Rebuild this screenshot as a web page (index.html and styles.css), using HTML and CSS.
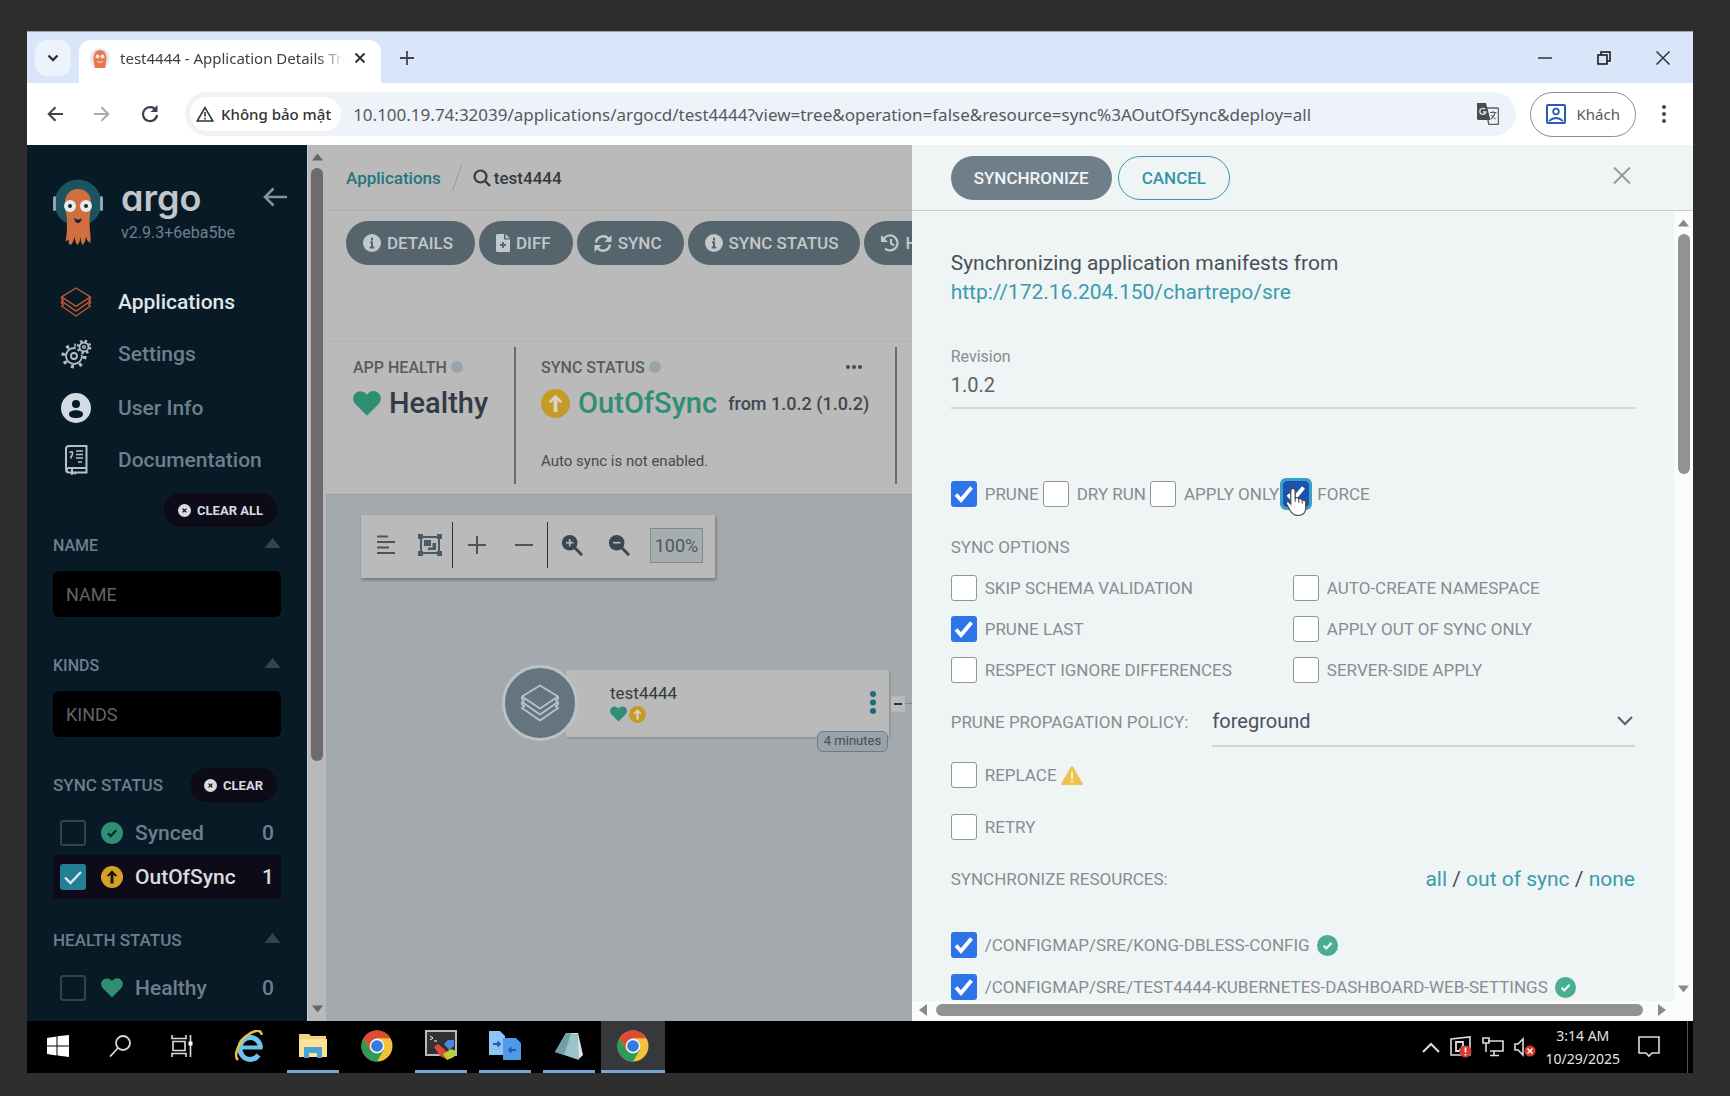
FILE: index.html
```html
<!DOCTYPE html>
<html lang="vi">
<head>
<meta charset="utf-8">
<title>test4444 - Application Details Tree - Argo CD</title>
<link rel="stylesheet" href="styles.css">
</head>
<body>
<svg class="defs" width="0" height="0" aria-hidden="true">
  <symbol id="i-heart" viewBox="0 0 24 22"><path d="M12 21.5 2.2 11.6C-.6 8.700-.5 4.200 2.300 1.900 5.100-.4 9 .2 11.200 2.600L12 3.500l.8-.9C15-.2 18.900-.4 21.700 1.900c2.800 2.300 2.900 6.800.1 9.700z" fill="#2f8f75"/></symbol>
  <symbol id="i-up" viewBox="0 0 24 24"><circle cx="12" cy="12" r="12" fill="var(--disc)"/><path d="M12 4.500l5.600 5.800-1.500 1.500-2.500-2.300V19h-3.200V9.500l-2.500 2.300-1.500-1.500z" fill="var(--mark)"/></symbol>
  <symbol id="i-ok" viewBox="0 0 24 24"><circle cx="12" cy="12" r="12" fill="var(--disc)"/><path d="M7.500 12.300l3.100 3 6-6.300" fill="none" stroke="var(--mark)" stroke-width="2.600"/></symbol>
  <symbol id="i-info" viewBox="0 0 24 24"><circle cx="12" cy="12" r="12" fill="currentColor"/><path d="M12 5v3.500M9.500 11H12v7M9 18h6" stroke="#56646d" stroke-width="2.600" fill="none"/></symbol>
  <symbol id="i-x" viewBox="0 0 24 24"><circle cx="12" cy="12" r="12" fill="currentColor"/><path d="M8.500 8.500l7 7M15.500 8.500l-7 7" stroke="#0d0b18" stroke-width="2.400"/></symbol>
  <symbol id="i-stack" viewBox="0 0 40 38"><g fill="none" stroke="currentColor" stroke-width="1.800" stroke-linejoin="round"><path d="M20 1.500 38 12.500 20 24.500 2 12.500z"/><path d="M4.500 16.500 2 18l18 12.500L38 18l-2.500-1.500"/><path d="M4.500 22 2 24l18 12.500L38 24l-2.500-2"/><path d="M2 12.500V15l2.500 1.500M38 12.500V15l-2.500 1.500M2 18v2.500L4.500 22M38 18v2.500L35.500 22"/></g></symbol>
  <symbol id="i-zoom" viewBox="0 0 24 24"><circle cx="9.500" cy="9.500" r="8.500" fill="currentColor"/><path d="M15 15l7 7" stroke="currentColor" stroke-width="3.200" stroke-linecap="round"/><path d="M5.500 9.500h8" stroke="#bababa" stroke-width="1.800"/></symbol>
  <symbol id="i-chrome" viewBox="0 0 32 32"><circle cx="16" cy="16" r="15.500" fill="#f3c13a"/><path d="M2.600 8.200A15.500 15.500 0 0 1 29.400 8.200H16L9.200 20z" fill="#dd4b36"/><path d="M2.600 8.200A15.500 15.500 0 0 0 16 31.500L22.700 19.900H9.300z" fill="#2f9a55"/><circle cx="16" cy="16" r="7.400" fill="#eef2f6"/><circle cx="16" cy="16" r="5.800" fill="#3777e0"/></symbol>
  <symbol id="i-tri" viewBox="0 0 16 10"><path d="M8 0l8 10H0z" fill="currentColor"/></symbol>
</svg>

<div class="desktop">
  <header class="tabstrip">
    <button class="tabsearch" aria-label="Search tabs"><svg width="12" height="8" viewBox="0 0 12 8"><path d="M1.500 1.500 6 6l4.500-4.500" fill="none" stroke="#333" stroke-width="2.400"/></svg></button>
    <div class="tab">
      <svg width="22" height="22" viewBox="0 0 22 22"><circle cx="11" cy="11" r="10" fill="#e3e8ee"/><path d="M4.500 10a6.500 7 0 0 1 13 0c0 4-1 6-1 11h-11c0-5-1-7-1-11z" fill="#e8794e"/><circle cx="8.500" cy="9.500" r="2" fill="#fbe3d8"/><circle cx="13.500" cy="9.500" r="2" fill="#fbe3d8"/><path d="M8 14.500q3 2 6 0" stroke="#fbe3d8" fill="none"/></svg>
      <span class="tab-title">test4444 - Application Details Tree</span>
      <button class="plain" aria-label="Close tab"><svg width="12" height="12" viewBox="0 0 12 12"><path d="M1.500 1.500l9 9M10.500 1.500l-9 9" stroke="#333" stroke-width="2"/></svg></button>
    </div>
    <button class="plain newtab" aria-label="New tab"><svg width="14" height="14" viewBox="0 0 14 14"><path d="M7 0v14M0 7h14" stroke="#444" stroke-width="1.800"/></svg></button>
    <div class="wincontrols">
      <button class="plain" aria-label="Minimize"><svg width="14" height="14" viewBox="0 0 14 14"><path d="M0 7h14" stroke="#333" stroke-width="1.500"/></svg></button>
      <button class="plain" aria-label="Restore"><svg width="14" height="14" viewBox="0 0 14 14"><path d="M1 4h9v9H1zM4 4V1h9v9h-3" fill="none" stroke="#111" stroke-width="1.500"/></svg></button>
      <button class="plain" aria-label="Close"><svg width="14" height="14" viewBox="0 0 14 14"><path d="M.5.500l13 13M13.500.500l-13 13" stroke="#333" stroke-width="1.500"/></svg></button>
    </div>
  </header>

  <nav class="toolbar">
    <button class="plain nav-btn" aria-label="Back"><svg width="16" height="16" viewBox="0 0 16 16"><path d="M16 8H2M8.500 1.200 1.700 8l6.800 6.800" fill="none" stroke="#444" stroke-width="2"/></svg></button>
    <button class="plain nav-btn" aria-label="Forward"><svg width="16" height="16" viewBox="0 0 16 16"><path d="M0 8h14M7.500 1.200 14.300 8l-6.800 6.800" fill="none" stroke="#aaa" stroke-width="2"/></svg></button>
    <button class="plain nav-btn" aria-label="Reload"><svg width="18" height="18" viewBox="0 0 18 18"><path d="M15 5.500A7 7 0 1 0 16 10" fill="none" stroke="#3c4250" stroke-width="2.200"/><path d="M16.500 0v7h-7z" fill="#3c4250"/></svg></button>
    <div class="omnibox">
      <button class="chip"><svg width="18" height="16" viewBox="0 0 18 16"><path d="M9 1.600 16.800 15H1.200z" fill="none" stroke="#333" stroke-width="1.600"/><path d="M9 6v4.500M9 11.800v1.600" stroke="#333" stroke-width="1.600"/></svg>Không bảo mật</button>
      <input class="url" type="text" aria-label="Address" value="10.100.19.74:32039/applications/argocd/test4444?view=tree&amp;operation=false&amp;resource=sync%3AOutOfSync&amp;deploy=all">
      <button class="plain" aria-label="Translate"><svg width="22" height="22" viewBox="0 0 22 22"><path d="M8 5h12a1.500 1.500 0 0 1 1.500 1.500V20a1.500 1.500 0 0 1-1.500 1.500h-8z" fill="#eef1f7" stroke="#5f6368" stroke-width="1.400"/><path d="M0 0h9l4.500 17H1.500A1.500 1.500 0 0 1 0 15.500z" fill="#4a4d52"/><path d="M8 6.300a3 3 0 1 0 .8 2.700H6" fill="none" stroke="#dfe3ea" stroke-width="1.400"/><path d="M13 9.500h6.500M16 8v1.500M18 10q-1 4-4 6M14.500 12q2 3 4 4" fill="none" stroke="#5f6368" stroke-width="1.200"/></svg></button>
    </div>
    <button class="profile"><svg width="20" height="20" viewBox="0 0 20 20"><rect x="1" y="1" width="18" height="18" rx="1" fill="none" stroke="#2c58b8" stroke-width="2"/><circle cx="10" cy="7.500" r="2.800" fill="none" stroke="#2c58b8" stroke-width="1.800"/><path d="M3 17q7-6 14 0" fill="none" stroke="#2c58b8" stroke-width="1.800"/></svg>Khách</button>
    <button class="plain" aria-label="Menu"><svg width="6" height="20" viewBox="0 0 6 20"><g fill="#444"><circle cx="3" cy="3" r="2"/><circle cx="3" cy="10" r="2"/><circle cx="3" cy="17" r="2"/></g></svg></button>
  </nav>

  <div class="page">
    <aside class="sidebar">
      <div class="brand">
        <svg width="50" height="68" viewBox="0 0 50 68"><circle cx="25" cy="25" r="23.500" fill="#1b5360"/><rect x="0" y="18" width="3" height="15" rx="1.500" fill="#8fa3b0"/><rect x="47" y="18" width="3" height="15" rx="1.500" fill="#8fa3b0"/><path d="M12 24c0-7 5-13 13-13s13 6 13 13c0 8-1.500 12-1.500 20 0 7 1.500 13 1 21-3-1-3.500-3-4.500-6-.5 3-1 6-3.500 8-1.500-2-1.500-5-2-8-.5 3-1 6-3 8-2-2-2.500-5-3-8-1 4-2 7-4.500 8-1.500-1-1.500-4-1.500-6-.5 1-1.500 2-3 2.500 1.500-6 1.500-14 1.500-20C14 36 12 32 12 24z" fill="#d06f3f"/><circle cx="17" cy="28" r="6" fill="#e8ebec"/><circle cx="33" cy="28" r="6" fill="#e8ebec"/><circle cx="17" cy="28" r="2" fill="#17252e"/><circle cx="33" cy="28" r="2" fill="#17252e"/><path d="M21 40q4 3 8 0-1 5-4 5t-4-5z" fill="#17252e"/></svg>
        <div class="brand-text"><span class="wordmark">argo</span><span class="version">v2.9.3+6eba5be</span></div>
        <button class="plain" aria-label="Collapse"><svg width="24" height="20" viewBox="0 0 24 20"><path d="M24 10H2.500M10.500 1.500 2 10l8.500 8.500" fill="none" stroke="#84929b" stroke-width="2.600"/></svg></button>
      </div>
      <ul class="menu">
        <li><a class="on" href="#applications"><svg class="orange" width="32" height="32"><use href="#i-stack"/></svg>Applications</a></li>
        <li><a href="#settings"><svg width="32" height="30" viewBox="0 0 32 30"><g fill="none" stroke="#b4c0c8"><circle cx="14" cy="17" r="8" stroke-width="1.800"/><circle cx="14" cy="17" r="10.800" stroke-width="3.600" stroke-dasharray="3 5.480"/><circle cx="14" cy="17" r="3" stroke-width="1.800"/></g><circle cx="24" cy="8" r="8.500" fill="#081a26"/><g fill="none" stroke="#b4c0c8"><circle cx="24" cy="8" r="4.500" stroke-width="1.800"/><circle cx="24" cy="8" r="6.200" stroke-width="2.200" stroke-dasharray="2.400 2.470"/><circle cx="24" cy="8" r="1.400" stroke-width="1.400"/></g></svg>Settings</a></li>
        <li><a class="user" href="#user-info"><svg width="32" height="30" viewBox="0 0 32 30"><circle cx="16" cy="15" r="15" fill="#d2dbe2"/><circle cx="16" cy="11" r="4" fill="#081a26"/><path d="M9 21c0-5 14-5 14 0 0 3-3 4-7 4s-7-1-7-4z" fill="#081a26"/></svg>User Info</a></li>
        <li><a href="#documentation"><svg width="32" height="30" viewBox="0 0 32 30"><g fill="none" stroke="#b4c0c8" stroke-width="2"><path d="M9 27.500a3 3 0 0 1-3-3V4a3 3 0 0 1 3-3h17.500v22H9a2.200 2.200 0 0 0 0 4.500h17.500V23M12 23v6l2-1.500 2 1.500"/><path d="M16 6h7M16 9.500h7M16 13h7M18 17h4" stroke-width="1.600"/><path d="M9.500 7.500q3.500-2 3 1t-1.500 3v2" stroke-width="1.600"/></g></svg>Documentation</a></li>
      </ul>
      <div class="clear-row"><button class="clear"><svg width="13" height="13"><use href="#i-x"/></svg>CLEAR ALL</button></div>

      <section class="filter">
        <h2><label for="f-name">NAME</label><svg width="17" height="10"><use href="#i-tri"/></svg></h2>
        <input id="f-name" class="field" type="text" placeholder="NAME">
      </section>
      <section class="filter">
        <h2><label for="f-kinds">KINDS</label><svg width="17" height="10"><use href="#i-tri"/></svg></h2>
        <input id="f-kinds" class="field" type="text" placeholder="KINDS">
      </section>
      <section class="filter status">
        <h2>SYNC STATUS<button class="clear"><svg width="13" height="13"><use href="#i-x"/></svg>CLEAR</button></h2>
        <label class="opt"><input type="checkbox"><svg class="ok" width="22" height="22"><use href="#i-ok"/></svg><span>Synced</span><b>0</b></label>
        <label class="opt on"><input type="checkbox" checked><svg class="up" width="22" height="22"><use href="#i-up"/></svg><span>OutOfSync</span><b>1</b></label>
      </section>
      <section class="filter status">
        <h2>HEALTH STATUS<svg width="17" height="10"><use href="#i-tri"/></svg></h2>
        <label class="opt"><input type="checkbox"><svg width="22" height="20"><use href="#i-heart"/></svg><span>Healthy</span><b>0</b></label>
      </section>
    </aside>
    <div class="vscroll dim"><svg width="11" height="8"><use href="#i-tri"/></svg><i class="side-thumb"></i><svg class="flip" width="11" height="8"><use href="#i-tri"/></svg></div>

    <main class="main">
      <div class="crumbs"><a href="#applications">Applications</a><svg width="10" height="26" viewBox="0 0 10 26"><path d="M9.500 0 .5 26" stroke="#999" stroke-width="1"/></svg><span class="crumb-app"><svg width="18" height="18" viewBox="0 0 18 18"><circle cx="7.500" cy="7.500" r="6" fill="none" stroke="#333a40" stroke-width="2.200"/><path d="M12 12l5 5" stroke="#333a40" stroke-width="2.400"/></svg>test4444</span></div>
      <div class="actions">
        <button class="btn"><svg width="18" height="18"><use href="#i-info"/></svg>DETAILS</button>
        <button class="btn"><svg width="14" height="18" viewBox="0 0 14 18"><path d="M1.500 0H8v5.500h6v11a1.500 1.500 0 0 1-1.500 1.500h-11A1.500 1.500 0 0 1 0 16.500v-15A1.500 1.500 0 0 1 1.500 0zM9.500 0 14 4.300H9.500z" fill="currentColor"/><path d="M7 8v6M4 11h6" stroke="#56646d" stroke-width="1.800"/></svg>DIFF</button>
        <button class="btn"><svg width="18" height="17" viewBox="0 0 18 17"><path d="M2 7.500A7 7 0 0 1 14.500 4M16 9.500A7 7 0 0 1 3.500 13" fill="none" stroke="currentColor" stroke-width="2.400"/><path d="M17.500 0v7h-7zM.5 17v-7h7z" fill="currentColor"/></svg>SYNC</button>
        <button class="btn"><svg width="18" height="18"><use href="#i-info"/></svg>SYNC STATUS</button>
        <button class="btn"><svg width="18" height="18" viewBox="0 0 18 18"><path d="M3 4.500A7.500 7.500 0 1 1 4 14.500M10 5v4.500l3 2" fill="none" stroke="currentColor" stroke-width="2.200"/><path d="M0 1v7h7z" fill="currentColor"/></svg>HISTORY AND ROLLBACK</button>
      </div>
      <div class="summary">
        <div class="cell">
          <h3>APP HEALTH<i class="hint"></i></h3>
          <p class="big"><svg width="28" height="27"><use href="#i-heart"/></svg>Healthy</p>
        </div>
        <div class="cell">
          <h3>SYNC STATUS<i class="hint"></i><button class="plain more" aria-label="More"><svg width="16" height="4" viewBox="0 0 16 4"><g fill="#444b50"><circle cx="2" cy="2" r="2"/><circle cx="8" cy="2" r="2"/><circle cx="14" cy="2" r="2"/></g></svg></button></h3>
          <p class="big green"><svg class="up-light" width="29" height="29"><use href="#i-up"/></svg>OutOfSync<small>from 1.0.2 (1.0.2)</small></p>
          <p class="note">Auto sync is not enabled.</p>
        </div>
      </div>
      <div class="graph">
        <div class="graph-tools">
          <button class="plain" aria-label="Align"><svg width="20" height="20" viewBox="0 0 20 20"><path d="M1 1.500h11M1 7h18M1 12.500h12M1 18h18" stroke="#4c545a" stroke-width="2"/></svg></button>
          <button class="plain" aria-label="Group"><svg width="24" height="22" viewBox="0 0 24 22"><g fill="none" stroke="#4c5a63" stroke-width="2"><path d="M3 3h18v16H3z"/></g><g fill="#4c5a63"><path d="M0 0h5v5H0zM19 0h5v5h-5zM0 17h5v5H0zM19 17h5v5h-5zM6 6h7v6H6zM14.500 9H18v7h-8v-2.500h4.500z"/></g></svg></button>
          <hr>
          <button class="plain wide" aria-label="Expand"><svg width="18" height="18" viewBox="0 0 18 18"><path d="M9 0v18M0 9h18" stroke="#4c545a" stroke-width="2"/></svg></button>
          <button class="plain wide" aria-label="Collapse all"><svg width="18" height="18" viewBox="0 0 18 18"><path d="M0 9h18" stroke="#4c545a" stroke-width="2"/></svg></button>
          <hr>
          <button class="plain wide" aria-label="Zoom in"><svg class="lens" width="22" height="22" viewBox="0 0 24 24"><use href="#i-zoom"/><path d="M9.500 5.500v8" stroke="#bababa" stroke-width="1.800"/></svg></button>
          <button class="plain wide" aria-label="Zoom out"><svg class="lens" width="22" height="22"><use href="#i-zoom"/></svg></button>
          <output class="pct">100%</output>
        </div>
        <div class="node">
          <div class="node-card"><div class="node-info"><span>test4444</span><div class="node-icons"><svg width="17" height="16"><use href="#i-heart"/></svg><svg class="up-light" width="17" height="17"><use href="#i-up"/></svg></div></div><button class="plain" aria-label="Node menu"><svg width="6" height="23" viewBox="0 0 6 23"><g fill="#1f6a80"><circle cx="3" cy="3" r="3"/><circle cx="3" cy="11.500" r="3"/><circle cx="3" cy="20" r="3"/></g></svg></button></div>
          <div class="node-disc"><svg width="40" height="38"><use href="#i-stack"/></svg></div>
          <span class="age">4 minutes</span>
          <i class="edge"></i>
          <button class="toggle" aria-label="Collapse children"><svg width="8" height="2"><path d="M0 1h8" stroke="#333" stroke-width="2"/></svg></button>
        </div>
      </div>
    </main>

    <section class="panel">
      <div class="panel-head">
        <button class="btn sync">SYNCHRONIZE</button>
        <button class="btn cancel">CANCEL</button>
        <button class="plain panel-x" aria-label="Close panel"><svg width="18" height="17" viewBox="0 0 18 17"><path d="M1 .5l16 16M17 .5l-16 16" stroke="#999" stroke-width="2"/></svg></button>
      </div>
      <div class="panel-body">
        <form class="form">
          <p class="lead">Synchronizing application manifests from<br><a href="#repo">http://172.16.204.150/chartrepo/sre</a></p>
          <div class="revision"><label for="rev">Revision</label><input id="rev" type="text" value="1.0.2"></div>
          <div class="flags">
            <label class="chk"><input type="checkbox" checked>PRUNE</label>
            <label class="chk"><input type="checkbox">DRY RUN</label>
            <label class="chk"><input type="checkbox">APPLY ONLY</label>
            <label class="chk focus"><input type="checkbox" checked>FORCE<svg class="cursor" width="24" height="31" viewBox="0 0 24 31"><path d="M8 2.500c1.500 0 2.200 1 2.200 2.500v7c2-.8 3.200-.2 3.600 1 1.600-.6 3-.1 3.400 1.200 2-.5 3.600.3 3.600 2.600v5c0 5-3 7.700-8 7.700-4.300 0-6-2-8-5.500L1.500 18c-.8-1.600.9-3 2.300-2l2 2V5c0-1.500.700-2.500 2.200-2.500z" fill="#fff" stroke="#444" stroke-width="1.200"/><path d="M10.200 12v4M13.800 13v4M17.200 14.500v3" stroke="#444" fill="none"/></svg></label>
          </div>
          <h4>SYNC OPTIONS</h4>
          <div class="options">
            <label class="chk"><input type="checkbox">SKIP SCHEMA VALIDATION</label>
            <label class="chk"><input type="checkbox">AUTO-CREATE NAMESPACE</label>
            <label class="chk"><input type="checkbox" checked>PRUNE LAST</label>
            <label class="chk"><input type="checkbox">APPLY OUT OF SYNC ONLY</label>
            <label class="chk"><input type="checkbox">RESPECT IGNORE DIFFERENCES</label>
            <label class="chk"><input type="checkbox">SERVER-SIDE APPLY</label>
          </div>
          <div class="policy"><label for="policy">PRUNE PROPAGATION POLICY:</label><div class="select"><select id="policy"><option>foreground</option><option>background</option><option>orphan</option></select><svg width="16" height="10" viewBox="0 0 16 10"><path d="M1 1l7 7 7-7" fill="none" stroke="#555e66" stroke-width="2"/></svg></div></div>
          <div class="extras">
            <label class="chk"><input type="checkbox">REPLACE<svg class="warn" width="22" height="19" viewBox="0 0 22 19"><path d="M11 1 21 18H1z" fill="#edc353" stroke="#edc353" stroke-width="2" stroke-linejoin="round"/><path d="M11 6v6.500M11 14.500v2" stroke="#fbf3da" stroke-width="2"/></svg></label>
            <label class="chk"><input type="checkbox">RETRY</label>
          </div>
          <div class="resources-head"><span>SYNCHRONIZE RESOURCES:</span><span class="picks"><a href="#all">all</a> / <a href="#out-of-sync">out of sync</a> / <a href="#none">none</a></span></div>
          <div class="resources">
            <label class="chk"><input type="checkbox" checked>/CONFIGMAP/SRE/KONG-DBLESS-CONFIG<svg class="ok-light" width="21" height="21"><use href="#i-ok"/></svg></label>
            <label class="chk"><input type="checkbox" checked>/CONFIGMAP/SRE/TEST4444-KUBERNETES-DASHBOARD-WEB-SETTINGS<svg class="ok-light" width="21" height="21"><use href="#i-ok"/></svg></label>
          </div>
        </form>
        <div class="vscroll"><svg width="11" height="8"><use href="#i-tri"/></svg><i class="panel-thumb"></i><svg class="flip" width="11" height="8"><use href="#i-tri"/></svg></div>
      </div>
      <div class="hscroll"><svg width="8" height="12" viewBox="0 0 8 12"><path d="M8 0v12L0 6z" fill="#8a8a8a"/></svg><i></i><svg width="8" height="12" viewBox="0 0 8 12"><path d="M0 0v12l8-6z" fill="#8a8a8a"/></svg></div>
    </section>
  </div>

  <footer class="taskbar">
    <button class="sys" aria-label="Start"><svg width="22" height="22" viewBox="0 0 22 22"><path d="M0 3l9.500-1.500v9H0zM10.500 1.300 22 0v10.500H10.500zM0 11.500h9.500v9L0 19zM10.500 11.500H22V22l-11.500-1.500z" fill="#fff"/></svg></button>
    <button class="sys" aria-label="Search"><svg width="22" height="22" viewBox="0 0 22 22"><circle cx="14" cy="8" r="7" fill="none" stroke="#d8d8d8" stroke-width="1.800"/><path d="M9 13 1 21.500" stroke="#d8d8d8" stroke-width="1.800"/></svg></button>
    <button class="sys" aria-label="Task view"><svg width="22" height="22" viewBox="0 0 22 22"><g fill="none" stroke="#dcdcdc" stroke-width="1.600"><path d="M1 0v3.500h14V0M1 22v-3.500h14V22M2 6.500h12v9H2zM19.500 0v22"/></g><path d="M17.500 6.500h4v4h-4z" fill="#fff"/></svg></button>
    <button class="first-app" aria-label="Internet Explorer"><svg width="30" height="32" viewBox="0 0 30 32"><path d="M26.500 17.500a10.300 11 0 1 0-2 7.500" fill="none" stroke="#6cc4ee" stroke-width="5"/><path d="M8 17.500h20.500" stroke="#6cc4ee" stroke-width="4"/><path d="M4 30C-1 26 5 10 15 4 22-.5 28 0 27.500 5" fill="none" stroke="#eec23c" stroke-width="2.400"/></svg></button>
    <button class="open" aria-label="File Explorer"><svg width="30" height="26" viewBox="0 0 30 26"><path d="M1 1h10l2 2h15v20H1z" fill="#f2d27a"/><path d="M1 6h28v18H1z" fill="#fae29a"/><path d="M6 25V14h18v11h-5v-5h-8v5z" fill="#4aa3d4"/></svg></button>
    <button aria-label="Chrome"><svg width="32" height="32"><use href="#i-chrome"/></svg></button>
    <button class="open" aria-label="Terminal"><svg width="32" height="31" viewBox="0 0 32 31"><path d="M1 1h30v24H1z" fill="#33302f" stroke="#b9b9b9" stroke-width="2"/><path d="M5 6l3 2-3 2M9 11h3" stroke="#fff" fill="none"/><path d="M9 17l4-3 5 4 4 4-1 7-6-3z" fill="#d94a3c"/><path d="M19 14l4-4h6v6l-5 4z" fill="#4a86dd"/><path d="M18 24l8-5 5 2-2 6-7 3z" fill="#b6d232"/></svg></button>
    <button class="open" aria-label="Remote copy"><svg width="32" height="30" viewBox="0 0 32 30"><path d="M0 0h11l5 5v19H0z" fill="#8fc5f6"/><path d="M14 7h13l5 5v17H14z" fill="#4f9ae8"/><path d="M4 13h7M8.500 10.500 11 13l-2.500 2.500M27 19h-7M22.500 16.500 20 19l2.500 2.500" stroke="#1f5fae" stroke-width="1.800" fill="none"/></svg></button>
    <button class="open" aria-label="Notes"><svg width="30" height="30" viewBox="0 0 30 30"><path d="M12 2h12l5 22-4 4z" fill="#dfe6e6"/><path d="M12 2 24 3l1 26L1 21z" fill="#9dc3c9"/><path d="M12 2l5 .5L10 24 1 21z" fill="#6f9fa8"/></svg></button>
    <button class="open active" aria-label="Chrome window"><svg width="32" height="32"><use href="#i-chrome"/></svg></button>
    <div class="tray">
      <svg width="18" height="11" viewBox="0 0 18 11"><path d="M1 10l8-8 8 8" fill="none" stroke="#ddd" stroke-width="2"/></svg>
      <svg width="22" height="22" viewBox="0 0 22 22"><path d="M1 3l19-2v18H1z" fill="none" stroke="#ddd" stroke-width="1.600"/><path d="M6 6h7v4l-4 5H6z" fill="none" stroke="#ddd" stroke-width="1.800"/><circle cx="15.500" cy="15.500" r="6" fill="#d23b2e"/><path d="M15.500 11.500v5M15.500 18v1.500" stroke="#fff" stroke-width="1.600"/></svg>
      <svg width="22" height="20" viewBox="0 0 22 20"><path d="M6 4h15v10H8M12 14v4M8 18.500h9M1 1h6v5H1zM4 6v9" fill="none" stroke="#ddd" stroke-width="1.600"/></svg>
      <svg width="22" height="20" viewBox="0 0 22 20"><path d="M1 7h3l5-5v16l-5-5H1z" fill="none" stroke="#ddd" stroke-width="1.600"/><circle cx="16" cy="14" r="5.500" fill="#d23b2e"/><path d="M13.500 11.500l5 5M18.500 11.500l-5 5" stroke="#fff" stroke-width="1.400"/></svg>
      <time class="clock">3:14 AM<br>10/29/2025</time>
      <svg class="bell" width="22" height="22" viewBox="0 0 22 22"><path d="M1 1h20v16h-7l-3 3-3-3H1z" fill="none" stroke="#ddd" stroke-width="1.600"/></svg>
    </div>
  </footer>
</div>
</body>
</html>
```
FILE: styles.css
```css
* { box-sizing: border-box; }
body { margin: 0; background: #2d2d2d; font-family: Roboto, "Liberation Sans", sans-serif; color: #363c4a; }
button, input, select { font-family: inherit; }
button { border: 0; cursor: pointer; }
h2, h3, h4, p, ul { margin: 0; padding: 0; font-weight: 400; }
a { text-decoration: none; }
svg { display: block; flex: none; }
.defs { position: absolute; }
.plain { background: none; padding: 0; flex: none; }
.desktop { display: flex; flex-direction: column; height: 100vh; padding: 31px 37px 23px 27px; }

/* browser chrome */
.tabstrip { display: flex; align-items: center; height: 52px; flex: none; background: #d9e5f9; padding: 0 23px 0 8px; border-top: 1px solid #9aa5b5; font-family: "Noto Sans", sans-serif; }
.tabsearch { width: 36px; height: 36px; border-radius: 12px; background: #edf3fc; display: grid; place-items: center; padding: 0; }
.tab { display: flex; align-items: center; gap: 9px; align-self: flex-end; width: 302px; height: 43px; margin-left: 8px; padding: 0 15px 7px 10px; border-radius: 12px 12px 0 0; background: #fff; }
.tab-title { flex: 1; font-size: 15px; white-space: nowrap; overflow: hidden; color: #3c3f43; -webkit-mask-image: linear-gradient(to right, #000 88%, transparent); mask-image: linear-gradient(to right, #000 88%, transparent); }
.newtab { margin-left: 19px; }
.wincontrols { display: flex; gap: 45px; margin-left: auto; }
.toolbar { display: flex; align-items: center; height: 62px; flex: none; background: #fff; padding: 0 26px 0 20px; font-family: "Noto Sans", sans-serif; }
.nav-btn { width: 18px; margin-right: 29px; }
.nav-btn + .nav-btn + .nav-btn { margin-right: 26px; }
.omnibox { flex: 1; display: flex; align-items: center; height: 44px; border-radius: 22px; background: #eef2f9; padding: 0 17px 0 5px; margin-right: 14px; min-width: 0; }
.chip { display: flex; align-items: center; gap: 7px; flex: none; height: 34px; padding: 0 10px 0 6px; border-radius: 17px; background: #fff; font-size: 15px; font-weight: 500; color: #333; white-space: nowrap; }
.url { flex: 1; min-width: 0; margin-left: 12px; border: 0; padding: 0; background: none; font-size: 17px; color: #55595e; outline: 0; }
.profile { display: flex; align-items: center; gap: 11px; height: 45px; padding: 0 15px; border: 1px solid #8c8c8c; border-radius: 23px; background: #fff; font-size: 15px; color: #55595e; margin-right: 25px; }

/* page */
.page { flex: 1; min-height: 0; display: flex; background: #bababa; overflow: hidden; }
.sidebar { flex: none; width: 280px; overflow: hidden; background: #081a26; padding: 33px 26px 0; color: #6d7f8b; }
.brand { display: flex; align-items: flex-start; height: 98px; }
.brand > button { margin: 9px -6px 0 auto; }
.brand-text { display: flex; flex-direction: column; margin-left: 18px; }
.wordmark { font: 600 36px/40px Inter, sans-serif; font-feature-settings: "cv11"; color: #c0c6ca; }
.version { font-size: 16px; line-height: 24px; margin-top: 3px; color: #6f818c; }
.menu { list-style: none; display: grid; }
.menu a { display: flex; align-items: center; gap: 26px; height: 52px; padding-left: 7px; font-size: 21px; font-weight: 500; color: #6d7f8b; }
.menu a.on { color: #dfe6ea; }
.menu a.user { height: 54px; padding-top: 2px; }
.orange { color: #bd5631; }
.clear-row { display: flex; justify-content: flex-end; padding: 7px 4px 0 0; }
.clear { display: flex; align-items: center; gap: 6px; height: 34px; padding: 0 14px; border-radius: 17px; background: #0d0b18; font-size: 13px; font-weight: 700; color: #d8dce0; }
.filter h2 { display: flex; align-items: center; justify-content: space-between; height: 36px; font-size: 16px; font-weight: 500; color: #6d7f8b; }
.filter h2 > svg { color: #34444f; margin-bottom: 4px; }
.field { width: 100%; height: 46px; margin: 8px 0 30px; border: 0; border-radius: 6px; background: #000; padding: 0 13px; font-size: 18px; color: #9aa6ae; }
.field::placeholder { color: #626466; opacity: 1; }
.opt { display: flex; align-items: center; height: 44px; padding: 0 7px; font-size: 21px; font-weight: 500; }
.opt b { margin-left: auto; font-weight: 500; }
.opt span { margin-left: 12px; }
.opt svg { margin-left: 15px; }
.opt input { appearance: none; margin: 0; width: 26px; height: 26px; border: 2px solid #34444f; border-radius: 3px; }
.opt input:checked { border: 0; background: #237f96 url("data:image/svg+xml,%3Csvg xmlns='http://www.w3.org/2000/svg' viewBox='0 0 26 26'%3E%3Cpath d='M5 13.500l5.500 5.500L21 8' fill='none' stroke='%23dce8ec' stroke-width='2.400'/%3E%3C/svg%3E"); }
.opt.on { background: #0d0b18; color: #d8dce0; }
.status { padding-bottom: 23px; }
.status h2 { margin-bottom: 8px; font-size: 17px; }
.status .clear { margin-right: 4px; }
.ok { --disc: #2f8f75; --mark: #0b2a2c; }
.up { --disc: #d5a02a; --mark: #1a1410; }
.up-light { --disc: #c59b28; --mark: #d8d4c6; }
.ok-light { --disc: #49ad93; --mark: #e8f6f1; margin-left: -1px; }

.vscroll { flex: none; width: 19px; display: flex; flex-direction: column; align-items: center; padding: 8px 0; background: #fafbfb; color: #8a8a8a; }
.vscroll i { width: 12px; border-radius: 6px; background: #929292; margin-top: 7px; }
.vscroll .flip { transform: rotate(180deg); margin-top: auto; }
.dim { background: #bab9ba; color: #666; border-left: 1px solid #cfcfcf; }
.dim i { background: #6d6b6c; }
.side-thumb { height: 69%; }
.panel-thumb { height: 31%; }

/* main column */
.main { flex: 1; min-width: 0; overflow: hidden; display: flex; flex-direction: column; }
.crumbs { display: flex; align-items: center; gap: 11px; height: 66px; flex: none; padding-left: 20px; font-size: 17px; font-weight: 500; border-bottom: 1px solid #adadad; }
.crumbs a { color: #24767d; }
.crumb-app { display: flex; gap: 3px; align-items: center; color: #333a40; }
.actions { display: flex; gap: 4px; padding: 10px 0 0 20px; height: 131px; flex: none; border-bottom: 1px solid #b0b1b2; }
.btn { display: flex; align-items: center; flex: none; gap: 6px; height: 44px; padding: 0 22px 0 17px; border-radius: 22px; background: #56646d; color: #c3c8cb; font-size: 17px; font-weight: 500; white-space: nowrap; }
.summary { display: flex; height: 152px; flex: none; padding: 5px 0 10px 27px; }
.cell { border-right: 2px solid #6b6b6b; padding: 8px 26px 0 0; color: #333a45; white-space: nowrap; }
.cell + .cell { padding-left: 25px; }
.cell h3 { display: flex; align-items: center; gap: 4px; height: 24px; font-size: 16px; font-weight: 500; color: #545d63; }
.hint { width: 12px; height: 12px; border-radius: 50%; background: #98a3aa; }
.more { margin-left: auto; margin-right: 7px; }
.big { display: flex; align-items: center; gap: 8px; height: 48px; font-size: 29px; font-weight: 500; }
.big.green { color: #2f8f75; }
.big small { font-size: 18px; font-weight: 500; color: #40474e; margin-left: 3px; }
.note { font-size: 15px; line-height: 20px; margin-top: 24px; color: #444b50; }
.graph { flex: 1; position: relative; background: #a3a9ac; border-top: 1px solid #989ea1; padding: 20px 35px; }
.graph-tools { display: flex; align-items: center; width: 354px; height: 63px; padding: 0 12px 3px 3px; background: #bababa; box-shadow: 1px 2px 3px rgba(0,0,0,.3); }
.graph-tools button { width: 44px; display: grid; place-items: center; }
.graph-tools .wide { width: 47px; }
.graph-tools hr { width: 1px; height: 46px; margin: 0; border: 0; background: #333; }
.lens { color: #3e464d; }
.pct { display: grid; place-items: center; width: 53px; height: 35px; margin-left: auto; border: 1px solid #7f888d; background: #a6adb0; font-size: 18px; color: #4f575d; }
.node { position: absolute; left: 176px; top: 169px; width: 420px; height: 80px; }
.node-card { position: absolute; left: 64px; top: 6px; width: 323px; height: 67px; background: #bababa; box-shadow: 1px 1px 2px rgba(0,0,0,.2); display: flex; align-items: center; justify-content: space-between; padding: 0 13px 2px 44px; font-size: 17px; color: #333a40; }
.node-info { display: grid; gap: 3px; }
.node-icons { display: flex; gap: 2px; }
.node-disc { position: absolute; left: 0; top: 1px; width: 76px; height: 76px; border: 3px solid #bcc2c5; border-radius: 50%; background: #647580; color: #b9c2c8; display: grid; place-items: center; }
.age { position: absolute; left: 315px; top: 67px; width: 71px; height: 21px; border: 1px solid #6e7b84; border-radius: 6px; background: #98a2a8; font-size: 13px; line-height: 18px; text-align: center; color: #454e58; }
.edge { position: absolute; left: 403px; top: 39px; width: 16px; height: 1px; background: #7d868b; }
.toggle { position: absolute; left: 389px; top: 32px; width: 14px; height: 16px; background: #bababa; padding: 0; display: grid; place-items: center; }

/* sync panel */
.panel { flex: none; width: 46.900%; display: flex; flex-direction: column; background: #eff4f5; }
.panel-head { display: flex; align-items: center; gap: 6px; height: 66px; flex: none; padding: 0 62px 0 39px; border-bottom: 1px solid #c6cbcd; }
.panel-head .btn { padding: 0 23px; }
.sync { background: #6f7e88; color: #f2f5f7; }
.cancel { background: none; border: 1px solid #3a9bad; color: #3395a8; }
.panel-x { margin: 0 0 5px auto; }
.panel-body { flex: 1; min-height: 0; display: flex; }
.form { flex: 1; min-width: 0; overflow: hidden; padding: 38px 39px 0; font-size: 17px; color: #868d92; }
.lead { font-size: 21px; line-height: 29px; color: #495057; }
.form a { color: #3a9bad; }
.revision { display: grid; margin-top: 38px; }
.revision label { font-size: 16px; line-height: 24px; }
.revision input { height: 40px; border: 0; border-bottom: 2px solid #cfd5d8; padding: 0 0 6px; background: none; font-size: 20px; color: #5a6168; }
.flags { display: flex; gap: 4px; margin-top: 70px; }
.chk { display: flex; align-items: center; gap: 8px; height: 30px; white-space: nowrap; }
.chk input { appearance: none; flex: none; margin: 0; width: 26px; height: 26px; border: 1px solid #8f9599; border-radius: 3px; background: #fff; }
.chk input:checked { border: 0; background: #2d74e8 url("data:image/svg+xml,%3Csvg xmlns='http://www.w3.org/2000/svg' viewBox='0 0 26 26'%3E%3Cpath d='M5 13.500l5 5.500L20.500 6.500' fill='none' stroke='white' stroke-width='3.800'/%3E%3C/svg%3E"); }
.focus { position: relative; }
.focus input:checked { outline: 3px solid #3b9fc9; background-color: #1a52ad; }
.cursor { position: absolute; left: 2px; top: 7px; }
.form h4 { font-size: 17px; line-height: 24px; margin: 26px 0 14px; }
.options { display: grid; grid-template-columns: 1fr 1fr; row-gap: 11px; }
.policy { display: flex; align-items: center; justify-content: space-between; gap: 24px; margin-top: 12px; }
.policy label { white-space: nowrap; }
.select { flex: 1; display: grid; align-items: center; border-bottom: 2px solid #cfd5d8; }
.select > * { grid-area: 1 / 1; }
.select select { appearance: none; height: 48px; border: 0; padding: 0; background: none; font-size: 20px; color: #4a5060; }
.select svg { justify-self: end; margin-right: 2px; pointer-events: none; }
.extras { display: grid; gap: 22px; margin-top: 13px; }
.warn { margin-left: -4px; }
.resources-head { display: flex; justify-content: space-between; align-items: center; margin-top: 22px; height: 30px; }
.picks { font-size: 21px; color: #495057; }
.resources { display: grid; gap: 12px; margin-top: 36px; }
.hscroll { display: flex; align-items: center; gap: 9px; height: 20px; flex: none; padding: 0 27px 2px 7px; background: #fafbfb; }
.hscroll i { flex: 1; height: 12px; border-radius: 6px; background: #929292; margin-right: 6px; }

/* taskbar */
.taskbar { display: flex; height: 52px; flex: none; background: #000; padding-right: 5px; font-family: "Noto Sans", sans-serif; }
.taskbar button { width: 64px; padding: 0 0 3px; background: none; display: grid; place-items: center; background-repeat: no-repeat; }
.taskbar .sys { width: 62px; }
.taskbar .first-app { margin-left: 4px; }
.taskbar .open { background-image: linear-gradient(#76a7d6, #76a7d6); background-size: 52px 3px; background-position: 50% 100%; }
.taskbar .active { background-color: #37383c; background-size: 100% 3px; }
.tray { display: flex; align-items: center; gap: 10px; margin-left: auto; color: #e4e4e4; padding-right: 27px; border-right: 1px solid #555; }
.clock { font-size: 14px; line-height: 23px; text-align: center; }
.bell { margin-left: 8px; }
```
